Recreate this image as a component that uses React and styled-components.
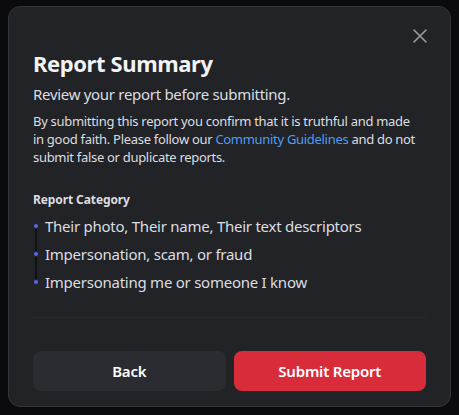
import styled, { createGlobalStyle } from "styled-components";

const GlobalStyle = createGlobalStyle`
  html, body {
    margin: 0;
    padding: 0;
    background: #0b0b0d;
  }
  body {
    font-family: "Noto Sans", "Open Sans", sans-serif;
    -webkit-font-smoothing: antialiased;
  }
`;

const Page = styled.div`
  width: 459px;
  height: 415px;
  padding: 6px 8px 8px 8px;
  box-sizing: border-box;
`;

const Modal = styled.div`
  position: relative;
  box-sizing: border-box;
  width: 443px;
  height: 401px;
  background: #222327;
  border: 1px solid #34353b;
  border-radius: 12px;
  padding: 41px 24px 0 24px;
  display: flex;
  flex-direction: column;
`;

const CloseButton = styled.button`
  position: absolute;
  top: 17px;
  right: 18px;
  width: 24px;
  height: 24px;
  padding: 0;
  border: 0;
  background: none;
  cursor: pointer;
  display: flex;
  align-items: center;
  justify-content: center;
`;

const Title = styled.h1`
  margin: 0;
  font-size: 22px;
  line-height: 30px;
  font-weight: 700;
  letter-spacing: -0.4px;
  color: #f2f3f5;
`;

const Subtitle = styled.p`
  margin: 6px 0 0 0;
  font-size: 15px;
  line-height: 20px;
  letter-spacing: -0.3px;
  color: #dbdee1;
`;

const Notice = styled.p`
  margin: 8px 0 0 0;
  max-width: 385px;
  font-size: 13px;
  line-height: 18px;
  color: #dbdee1;
  letter-spacing: -0.3px;
`;

const Link = styled.a`
  color: #4e9df5;
  text-decoration: none;
`;

const SectionLabel = styled.h2`
  margin: 26px 0 0 0;
  font-size: 12px;
  line-height: 16px;
  font-weight: 700;
  letter-spacing: -0.1px;
  color: #dbdee1;
`;

const List = styled.ul`
  list-style: none;
  margin: 4px 0 0 0;
  padding: 0;
`;

const Item = styled.li`
  position: relative;
  display: flex;
  align-items: center;
  height: 28px;
  padding-left: 12px;
  font-size: 15px;
  letter-spacing: -0.25px;
  color: #dbdee1;

  &::before {
    content: "";
    position: absolute;
    left: 1px;
    top: 12px;
    width: 4px;
    height: 4px;
    border-radius: 50%;
    background: #5865f2;
  }

  ${({ $line }) =>
    $line &&
    `&::after {
      content: "";
      position: absolute;
      left: 2px;
      top: 17px;
      width: 2px;
      height: 22px;
      background: #121214;
    }`}
`;

const Divider = styled.div`
  margin-top: 21px;
  height: 1px;
  background: #2a2b30;
`;

const Actions = styled.div`
  display: grid;
  grid-template-columns: 1fr 1fr;
  gap: 8px;
  margin-top: 33px;
`;

const Button = styled.button`
  height: 40px;
  border: 0;
  border-radius: 8px;
  font-family: inherit;
  font-size: 15px;
  font-weight: 600;
  letter-spacing: -0.2px;
  color: #ffffff;
  background: ${({ $danger }) => ($danger ? "#d92c3b" : "#2b2c31")};
  cursor: pointer;
`;

const CloseIcon = () => (
  <svg width="16" height="16" viewBox="0 0 16 16" fill="none">
    <path
      d="M2 2L14 14M14 2L2 14"
      stroke="#9b9ca3"
      strokeWidth="1.6"
      strokeLinecap="round"
    />
  </svg>
);

const categories = [
  "Their photo, Their name, Their text descriptors",
  "Impersonation, scam, or fraud",
  "Impersonating me or someone I know",
];

export default function App() {
  return (
    <Page>
      <GlobalStyle />
      <Modal>
        <CloseButton aria-label="Close">
          <CloseIcon />
        </CloseButton>
        <Title>Report Summary</Title>
        <Subtitle>Review your report before submitting.</Subtitle>
        <Notice>
          By submitting this report you confirm that it is truthful and made
          in good faith. Please follow our{" "}
          <Link href="#">Community Guidelines</Link> and do not submit false
          or duplicate reports.
        </Notice>
        <SectionLabel>Report Category</SectionLabel>
        <List>
          {categories.map((c, i) => (
            <Item key={c} $line={i < categories.length - 1}>
              {c}
            </Item>
          ))}
        </List>
        <Divider />
        <Actions>
          <Button>Back</Button>
          <Button $danger>Submit Report</Button>
        </Actions>
      </Modal>
    </Page>
  );
}
